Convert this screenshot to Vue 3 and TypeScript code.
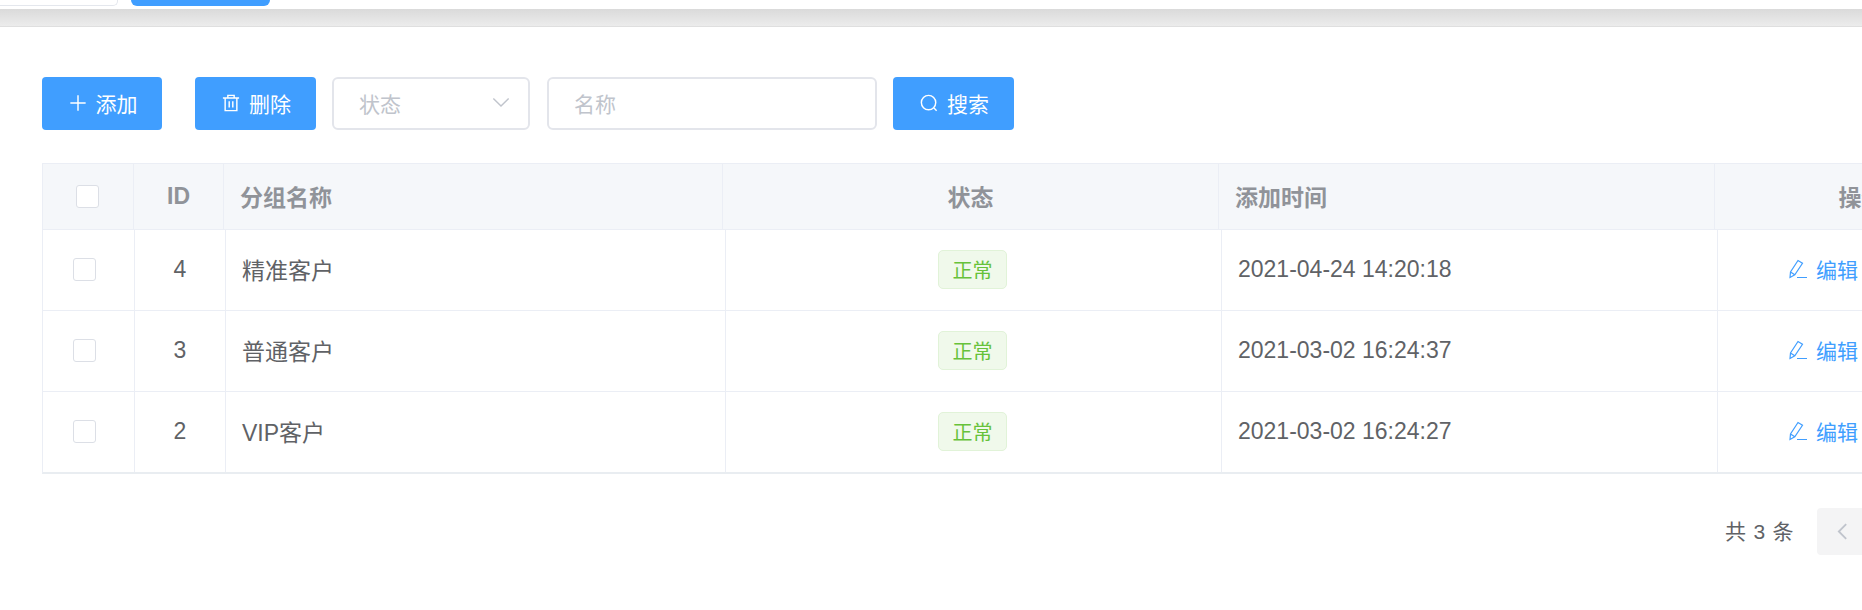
<script setup lang="ts">
type Group = { id: number; name: string; time: string };

const groups: Group[] = [
  { id: 4, name: "精准客户", time: "2021-04-24 14:20:18" },
  { id: 3, name: "普通客户", time: "2021-03-02 16:24:37" },
  { id: 2, name: "VIP客户", time: "2021-03-02 16:24:27" },
];
</script>

<template>
  <div class="page">
    <div class="tabs">
      <div class="tab"></div>
      <div class="tab active"></div>
    </div>
    <div class="band"></div>

    <main class="content">
      <div class="toolbar">
        <button type="button" class="btn add">
          <svg class="icon" viewBox="0 0 20 20"><path d="M10 1.5v17M1.5 10h17" /></svg>
          添加
        </button>
        <button type="button" class="btn del">
          <svg class="icon" viewBox="0 0 20 20">
            <path d="M1 4.5h18M6.5 4.5V1.5h7v3M3.5 4.5v14h13v-14M8 8v7M12 8v7" />
          </svg>
          删除
        </button>
        <div class="field select">
          <span>状态</span>
          <svg class="arrow" viewBox="0 0 20 12"><path d="M1.5 1.5 10 10l8.5-8.5" /></svg>
        </div>
        <div class="field name">名称</div>
        <button type="button" class="btn search">
          <svg class="icon" viewBox="0 0 20 20">
            <circle cx="9.5" cy="9.5" r="8" />
            <path d="m15.5 15.5 3 3" />
          </svg>
          搜索
        </button>
      </div>

      <div class="table">
        <div class="head">
          <div class="cell center first"><span class="check"></span></div>
          <div class="cell center">ID</div>
          <div class="cell left">分组名称</div>
          <div class="cell center">状态</div>
          <div class="cell left">添加时间</div>
          <div class="cell center">操作</div>
        </div>
        <div v-for="g in groups" :key="g.id" class="row">
          <div class="cell center first"><span class="check"></span></div>
          <div class="cell center">{{ g.id }}</div>
          <div class="cell left">{{ g.name }}</div>
          <div class="cell center"><span class="tag">正常</span></div>
          <div class="cell left">{{ g.time }}</div>
          <div class="cell actions">
            <a class="edit">
              <svg class="pen" viewBox="0 0 20 20">
                <path d="M2 18.5 2.5 13 10 1.5l4.5 2.8L6.8 15.8ZM2.5 13l4.300 2.800M9 18.500h10" />
              </svg>
              编辑
            </a>
          </div>
        </div>
      </div>

      <div class="pager">
        <span class="total">共 3 条</span>
        <span class="prev">
          <svg viewBox="0 0 12 20"><path d="M10 2 2 10l8 8" /></svg>
        </span>
      </div>
    </main>
  </div>
</template>

<style>
html,
body {
  margin: 0;
  background: #fff;
  overflow: hidden;
}
</style>

<style scoped>
.page {
  width: 1862px;
  height: 610px;
  overflow: hidden;
  font-family: "Liberation Sans", "Noto Sans CJK SC", sans-serif;
  color: #606266;
}

.tabs {
  display: flex;
  gap: 13px;
  height: 9px;
}

.tab {
  width: 117px;
  height: 5px;
  background: #fff;
  border: 1px solid #e4e7ed;
  border-top: 0;
  border-left: 0;
  border-radius: 0 0 5px 0;
}

.tab.active {
  width: 139px;
  height: 6px;
  background: #409eff;
  border: 0;
  border-radius: 0 0 6px 6px;
}

.band {
  height: 17px;
  background: linear-gradient(#dadada, #ececec);
  border-bottom: 1px solid #dfdfdf;
}

.content {
  padding: 50px 0 0 42px;
  width: 1950px;
}

.toolbar {
  display: flex;
  align-items: stretch;
  height: 53px;
}

.btn {
  display: flex;
  align-items: center;
  justify-content: center;
  gap: 9px;
  width: 120px;
  padding: 0 0 2px 2px;
  border: 0;
  border-radius: 4px;
  background: #409eff;
  color: #fff;
  font: inherit;
  font-size: 21px;
}

.del {
  margin-left: 33px;
  width: 121px;
}

.search {
  margin-left: 16px;
  width: 121px;
}

.icon {
  width: 18px;
  height: 18px;
  fill: none;
  stroke: #fff;
  stroke-width: 1.6;
}

.field {
  box-sizing: border-box;
  display: flex;
  align-items: center;
  justify-content: space-between;
  border: 2px solid #e3e5eb;
  border-radius: 6px;
  padding: 0 18px 2px 25px;
  background: #fff;
  color: #c0c4cc;
  font-size: 21px;
}

.select {
  width: 198px;
  margin-left: 16px;
}

.name {
  width: 330px;
  margin-left: 17px;
}

.arrow {
  width: 18px;
  height: 11px;
  fill: none;
  stroke: #c0c4cc;
  stroke-width: 1.6;
}

.table {
  margin-top: 33px;
  border-left: 1px solid #ebeef5;
  border-top: 1px solid #ebeef5;
  border-bottom: 2px solid #e9edf1;
}

.head,
.row {
  display: grid;
}

.head {
  grid-template-columns: 91px 90px 499px 496px 496px 294px;
  height: 65px;
  background: #f5f7fa;
  border-bottom: 1px solid #ebeef5;
  font-size: 23px;
  font-weight: 700;
  color: #909399;
}

.head .cell {
  padding-bottom: 1px;
}

.head .first {
  padding-right: 2px;
}

.row {
  grid-template-columns: 92px 91px 500px 496px 496px 294px;
  height: 80px;
  font-size: 23px;
}

.row + .row {
  border-top: 1px solid #ebeef5;
}

.cell {
  display: flex;
  align-items: center;
  box-sizing: border-box;
  border-right: 1px solid #ebeef5;
}

.row .cell {
  padding-bottom: 2px;
}

.row .first {
  padding-right: 8px;
}

.center {
  justify-content: center;
}

.left {
  padding-left: 16px;
}

.check {
  box-sizing: border-box;
  width: 23px;
  height: 23px;
  background: #fff;
  border: 1px solid #dcdfe6;
  border-radius: 3px;
}

.tag {
  box-sizing: border-box;
  display: flex;
  align-items: center;
  justify-content: center;
  width: 69px;
  height: 39px;
  margin-right: 2px;
  font-size: 20px;
  color: #67c23a;
  background: #f0f9eb;
  border: 1px solid #e1f3d8;
  border-radius: 5px;
}

.actions {
  padding-left: 70px;
}

.edit {
  display: flex;
  align-items: center;
  gap: 8px;
  padding-bottom: 1px;
  font-size: 21px;
  color: #409eff;
}

.pen {
  width: 20px;
  height: 20px;
  fill: none;
  stroke: #409eff;
  stroke-width: 1.2;
}

.pager {
  display: flex;
  align-items: center;
  height: 47px;
  margin-top: 34px;
  padding-left: 1683px;
}

.total {
  font-size: 21px;
  letter-spacing: 0.8px;
  width: 92px;
  padding-bottom: 3px;
}

.prev {
  display: flex;
  align-items: center;
  justify-content: center;
  flex: none;
  width: 50px;
  height: 47px;
  background: #f4f4f5;
  border-radius: 4px;
}

.prev svg {
  width: 11px;
  height: 19px;
  fill: none;
  stroke: #c0c4cc;
  stroke-width: 2;
}
</style>
